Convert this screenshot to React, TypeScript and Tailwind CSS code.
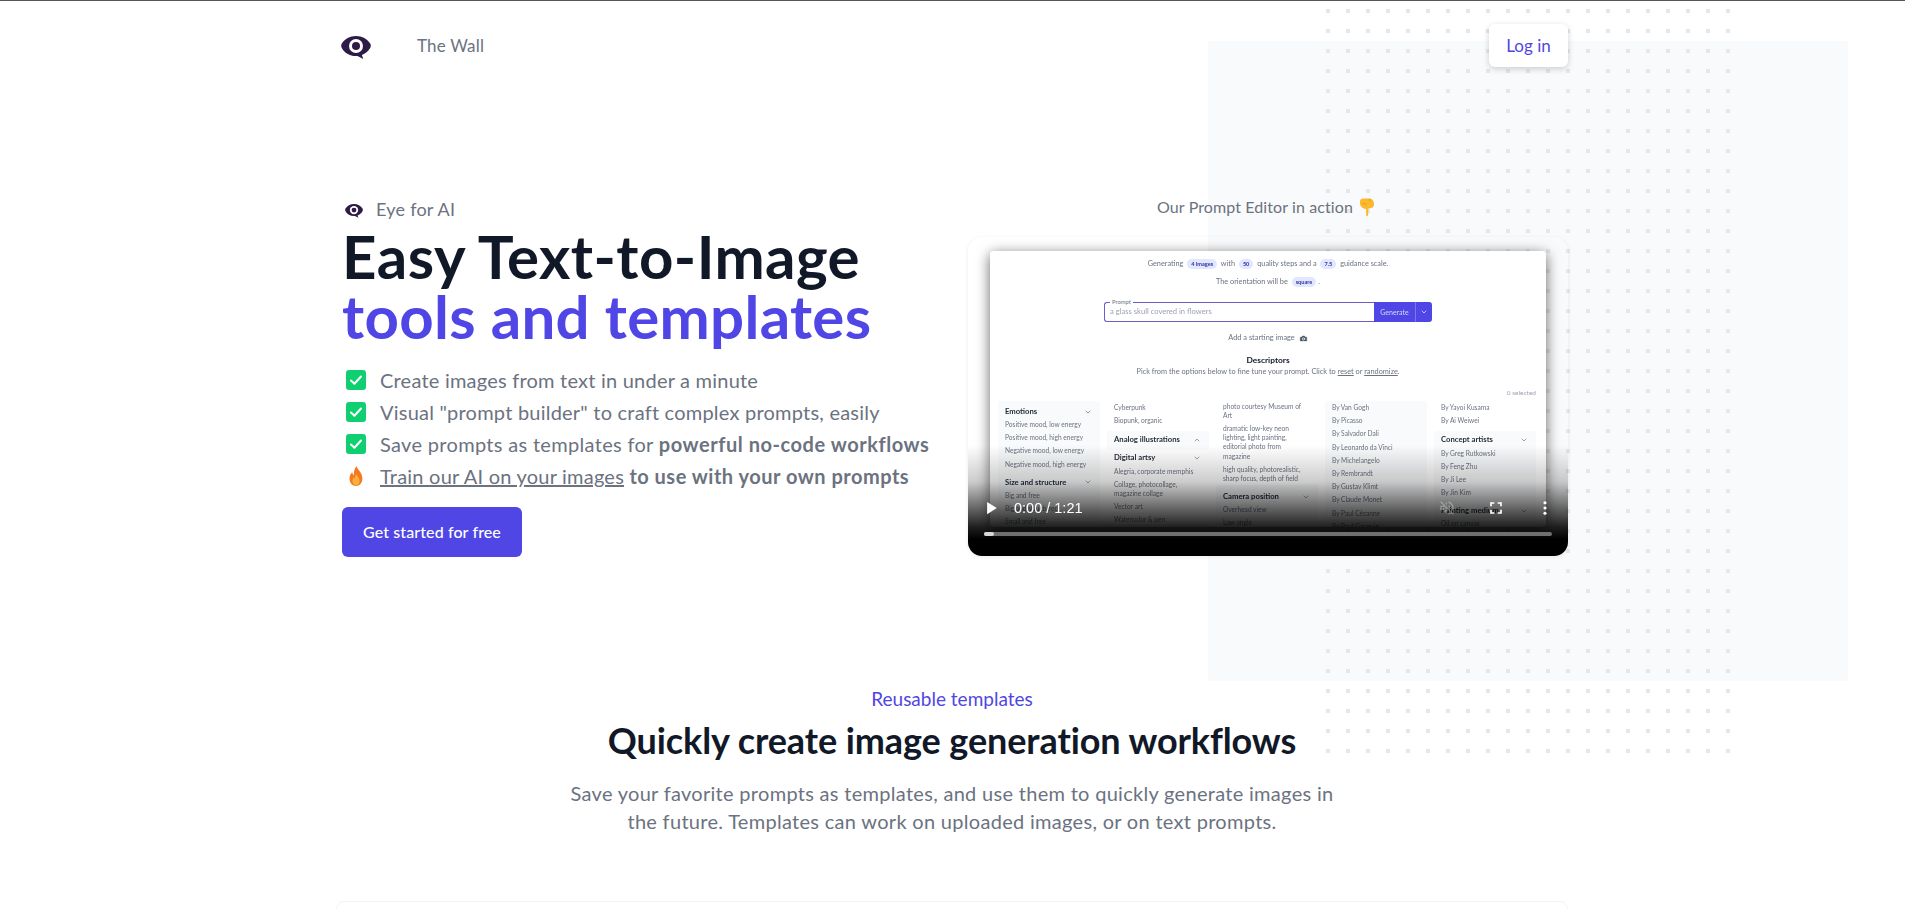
import { ChevronDown, ChevronUp, Camera } from 'lucide-react';
import type { ReactNode } from 'react';

function EyeLogo({ className }: { className: string }) {
  return (
    <svg viewBox="0 0 30 23" className={className} fill="none">
      <path
        d="M0.800 7.500C3.500 3 9 0 15 0s11.500 3 14.200 7.500c.8 1.400.8 3 0 4.400-2 3.400-4.800 5.700-8.300 7l1.400 4-5.800-3C9.500 20.500 3.500 17 .800 11.900c-.8-1.400-.8-3 0-4.400z"
        fill="#2e1a47"
      />
      <circle cx="15" cy="10" r="7" fill="#fff" />
      <circle cx="15" cy="10" r="4" fill="#2e1a47" />
    </svg>
  );
}

function CheckBox() {
  return (
    <span className="flex h-5 w-5 shrink-0 items-center justify-center rounded-[3px] bg-[#10cf70]">
      <svg viewBox="0 0 20 20" className="h-5 w-5" fill="none" stroke="#fff" strokeWidth="2" strokeLinecap="round" strokeLinejoin="round">
        <path d="M5 10.500l3.400 3.200L15 6.500" />
      </svg>
    </span>
  );
}

function Flame() {
  return (
    <svg viewBox="0 0 20 20" className="h-5 w-5 shrink-0">
      <path d="M10.500 0c.6 3.500 5.900 6.300 5.900 12.500C16.400 17 13.500 20 10 20s-6.500-3-6.500-7.500c0-2.800 1.300-4.800 2.700-6.200.2 1.500.8 2.400 1.700 2.900C7.700 5.500 8.500 2.500 10.500 0z" fill="#f4791f" />
      <path d="M10.300 8c.4 2 3.300 3.500 3.300 7 0 2.600-1.600 4.200-3.600 4.200S6.400 17.600 6.400 15c0-1.800 1-3 1.800-3.700.1.700.4 1.100.8 1.300C8.900 11 9.300 9.500 10.300 8z" fill="#fbb03b" />
    </svg>
  );
}

function HandDown() {
  return (
    <svg viewBox="0 0 16 18" className="h-[18px] w-4 shrink-0">
      <path d="M1 3.500C1 1.800 2.300 0.500 4 0.500h6c2.800 0 5 2.200 5 5v1c0 1.900-1.300 3.400-3 3.400-.4 0-.7.1-1 .3-.5.4-1.100.5-1.800.4v6c0 .9-.7 1.500-1.500 1.500S7.200 17.500 7.200 16.600V11C3.500 10.700 1 8.200 1 5.500z" fill="#fbb92d" />
      <path d="M10 0.700h1.500v2.500H10zM3 4.500l5 1.200v1.400L3 5.800z" fill="#f19a20" opacity="0.8" />
    </svg>
  );
}

function Item({ children }: { children: ReactNode }) {
  return <div className="whitespace-pre-line py-[2px] text-[6.600px] leading-[9.200px] text-[#6b7280]">{children}</div>;
}

function Heading({ title, up }: { title: string; up?: boolean }) {
  return (
    <div className="flex h-[13px] items-center justify-between pr-[1px] text-[7.700px] font-bold text-[#1f2937]">
      <span>{title}</span>
      {up ? <ChevronUp size={8} strokeWidth={2} className="text-[#6b7280]" /> : <ChevronDown size={8} strokeWidth={2} className="text-[#6b7280]" />}
    </div>
  );
}

function Rows({ items }: { items: string[] }) {
  return (
    <>
      {items.map((t) => (
        <Item key={t}>{t}</Item>
      ))}
    </>
  );
}

function Pill({ children }: { children: ReactNode }) {
  return <span className="mx-[2px] rounded-full bg-[#e0e7ff] px-[4px] py-[1px] text-[5.600px] font-bold text-[#3730a3]">{children}</span>;
}

function EditorFrame() {
  return (
    <div className="h-[276px] w-[556px] overflow-hidden rounded-[3px] bg-white text-center shadow-[0_3px_14px_rgba(0,0,0,0.6)] blur-[0.35px]">
      <div className="pt-[5px] text-[7.300px] text-[#6b7280]">
        <div className="flex h-[16px] items-center justify-center whitespace-pre">
          Generating <Pill>4 images</Pill> with <Pill>50</Pill> quality steps and a <Pill>7.5</Pill> guidance scale.
        </div>
        <div className="mt-[2px] flex h-[16px] items-center justify-center whitespace-pre">
          The orientation will be <Pill>square</Pill>.
        </div>
      </div>
      <div className="relative mx-auto mt-[12px] flex h-[20px] w-[328px]">
        <span className="absolute left-[6px] top-[-4px] bg-white px-[2px] text-[5.800px] leading-[8px] text-[#6b7280]">Prompt</span>
        <div className="flex flex-1 items-center rounded-l-[3px] border border-r-0 border-[#6a5fc9] pl-[5px] text-[7.600px] text-[#9ca3af]">
          a glass skull covered in flowers
        </div>
        <div className="flex w-[41px] items-center justify-center bg-[#4f46e5] text-[7px] text-[#d7d6f7]">Generate</div>
        <div className="flex w-[17px] items-center justify-center rounded-r-[3px] border-l border-[#7d76e8] bg-[#4f46e5] text-white">
          <ChevronDown size={8} strokeWidth={2} />
        </div>
      </div>
      <div className="mt-[8px] flex h-[16px] items-center justify-center gap-[4px] text-[7.400px] text-[#6b7280]">
        Add a starting image
        <Camera size={9} className="fill-[#4b5563] text-white" />
      </div>
      <div className="mt-[8px] h-[12px] text-[8.400px] font-bold leading-[12px] text-[#111827]">Descriptors</div>
      <div className="h-[12px] text-[7.350px] leading-[12px] text-[#6b7280]">
        Pick from the options below to fine tune your prompt. Click to <span className="underline">reset</span> or{' '}
        <span className="underline">randomize</span>.
      </div>
      <div className="mt-[9px] h-[12px] pr-[10px] text-right text-[6.500px] leading-[12px] text-[#9ca3af]">0 selected</div>
      <div className="mt-[2px] grid grid-cols-[repeat(5,102px)] gap-x-[7px] px-[8px] text-left">
        <div>
          <div className="rounded-[2px] bg-[#f9fafb] px-[7px] pb-[1px] pt-[4px]">
            <Heading title="Emotions" />
            <Rows items={['Positive mood, low energy', 'Positive mood, high energy', 'Negative mood, low energy', 'Negative mood, high energy']} />
          </div>
          <div className="rounded-[2px] bg-[#f9fafb] px-[7px] pt-[4px]">
            <Heading title="Size and structure" />
            <Rows items={['Big and free', 'Big and structured', 'Small and free']} />
          </div>
        </div>
        <div>
          <div className="px-[7px]">
            <Rows items={['Cyberpunk', 'Biopunk, organic']} />
          </div>
          <div className="mt-[3.600px] h-[19px] rounded-[2px] bg-[#f9fafb] px-[7px] pt-[2.500px]">
            <Heading title="Analog illustrations" up />
          </div>
          <div className="px-[7px] pt-[1.500px]">
            <Heading title="Digital artsy" />
            <Rows items={['Alegria, corporate memphis', 'Collage, photocollage,\nmagazine collage', 'Vector art', 'Watercolor & pen']} />
          </div>
        </div>
        <div className="mt-[-1.500px]">
          <div className="px-[7px]">
            <Rows
              items={[
                'photo courtesy Museum of\nArt',
                'dramatic low-key neon\nlighting, light painting,\neditorial photo from\nmagazine',
                'high quality, photorealistic,\nsharp focus, depth of field',
              ]}
            />
          </div>
          <div className="rounded-[2px] bg-[#f9fafb] px-[7px] pt-[5px]">
            <Heading title="Camera position" />
            <Rows items={['Overhead view', 'Low angle']} />
          </div>
        </div>
        <div className="rounded-[2px] bg-[#f9fafb] px-[7px]">
          <Rows
            items={[
              'By Van Gogh',
              'By Picasso',
              'By Salvador Dali',
              'By Leonardo da Vinci',
              'By Michelangelo',
              'By Rembrandt',
              'By Gustav Klimt',
              'By Claude Monet',
              'By Paul Cézanne',
              'By Paul Gauguin',
            ]}
          />
        </div>
        <div>
          <div className="px-[7px]">
            <Rows items={['By Yayoi Kusama', 'By Ai Weiwei']} />
          </div>
          <div className="mt-[3.600px] rounded-[2px] bg-[#f9fafb] px-[7px] pb-[2px] pt-[2.500px]">
            <Heading title="Concept artists" />
            <Rows items={['By Greg Rutkowski', 'By Feng Zhu', 'By Ji Lee', 'By Jin Kim']} />
          </div>
          <div className="rounded-[2px] bg-[#f9fafb] px-[7px] pt-[3px]">
            <Heading title="Painting medium" />
            <Rows items={['Oil on canvas']} />
          </div>
        </div>
      </div>
    </div>
  );
}

function VideoPanel() {
  return (
    <div className="relative h-[319px] w-[600px] overflow-hidden rounded-[14px] px-[22px] pt-[14px] shadow-[0_1px_4px_rgba(0,0,0,0.08)]">
      <EditorFrame />
      <div className="absolute inset-x-0 bottom-0 h-[111px] bg-[linear-gradient(to_bottom,transparent,rgba(0,0,0,0.2)_33%,rgba(0,0,0,0.6)_57%,rgba(0,0,0,0.88)_74%,#000_85%)]" />
      <div className="absolute bottom-[38px] left-[17px] right-[21px] flex items-center text-white">
        <svg viewBox="6 4 14 16" className="h-[14px] w-[13px]" fill="#fff">
          <path d="M8 5v14l11-7z" />
        </svg>
        <span className="ml-[16px] font-['Liberation_Sans',sans-serif] text-[14.500px] leading-[16px]">0:00 / 1:21</span>
        <svg viewBox="0 0 24 24" className="ml-auto h-[18px] w-[18px]" fill="rgba(255,255,255,0.3)">
          <path d="M16.500 12c0-1.770-1.020-3.290-2.500-4.030v2.210l2.450 2.450c.03-.2.05-.41.05-.63zm2.500 0c0 .94-.2 1.820-.54 2.640l1.510 1.510C20.630 14.910 21 13.500 21 12c0-4.280-2.990-7.860-7-8.770v2.060c2.890.86 5 3.540 5 6.710zM4.270 3L3 4.270 7.730 9H3v6h4l5 5v-6.730l4.250 4.250c-.67.52-1.420.93-2.250 1.180v2.060c1.380-.31 2.630-.95 3.690-1.810L19.730 21 21 19.730l-9-9L4.270 3zM12 4L9.910 6.090 12 8.180V4z" />
        </svg>
        <svg viewBox="0 0 24 24" className="ml-[30px] h-[20px] w-[20px]" fill="#fff">
          <path d="M7 14H5v5h5v-2H7v-3zm-2-4h2V7h3V5H5v5zm12 7h-3v2h5v-5h-2v3zM14 5v2h3v3h2V5h-5z" />
        </svg>
        <svg viewBox="0 0 4 16" className="ml-[37px] h-[14px] w-[4px]" fill="#fff">
          <circle cx="2" cy="2" r="1.800" />
          <circle cx="2" cy="8" r="1.800" />
          <circle cx="2" cy="14" r="1.800" />
        </svg>
      </div>
      <div className="absolute bottom-[20px] left-[16px] right-[16px] h-[4px] rounded-full bg-[#6f6f6f]">
        <div className="h-full w-[10px] rounded-full bg-[#d8d8d8]" />
      </div>
    </div>
  );
}

export default function App() {
  return (
    <div className="relative h-[909px] overflow-hidden bg-white font-['Lato',sans-serif]">
      <div className="h-px bg-[#555]" />

      {/* backdrop */}
      <div className="absolute left-[1208px] top-[41px] h-[640px] w-[640px] bg-[#f9fafb]" />
      <svg className="absolute left-[1326px] top-[9px]" width="404" height="744">
        <defs>
          <pattern id="dots" x="0" y="0" width="20" height="20" patternUnits="userSpaceOnUse">
            <rect width="4" height="4" fill="#e5e7eb" />
          </pattern>
        </defs>
        <rect width="404" height="744" fill="url(#dots)" />
      </svg>

      <div className="relative ml-[336px] w-[1232px]">
        <nav className="mt-[23px] flex h-[43px] items-center">
          <EyeLogo className="ml-[5px] mt-[3px] h-[23px] w-[30px]" />
          <a className="ml-[46px] text-[17px] tracking-[0.2px] text-[#6b7280]">The Wall</a>
          <button className="ml-auto h-[43px] w-[79px] rounded-md bg-white text-[17px] text-[#4f46e5] shadow-[0_2px_6px_rgba(0,0,0,0.18)]">Log in</button>
        </nav>

        <section className="mt-[126px] flex items-start justify-between">
          <div className="ml-[6px] pt-[2px]">
            <div className="flex h-[28px] items-center text-[18px] tracking-[0.25px] text-[#6b7280]">
              <EyeLogo className="ml-[3px] mt-[3px] h-[14px] w-[18px]" />
              <span className="ml-[13px]">Eye for AI</span>
            </div>
            <h1 className="mt-[3px] text-[60px] font-bold leading-[60px] tracking-[0.45px] text-[#111827]">
              Easy Text-to-Image
              <br />
              <span className="tracking-[0.3px] text-[#4f46e5]">tools and templates</span>
            </h1>
            <ul className="mt-[18px] text-[20px] leading-[32px] tracking-[0.22px] text-[#6b7280]">
              <li className="flex items-center pl-[4px]">
                <CheckBox />
                <span className="ml-[14px]">Create images from text in under a minute</span>
              </li>
              <li className="flex items-center pl-[4px]">
                <CheckBox />
                <span className="ml-[14px]">Visual "prompt builder" to craft complex prompts, easily</span>
              </li>
              <li className="flex items-center pl-[4px]">
                <CheckBox />
                <span className="ml-[14px] tracking-[0.32px]">
                  Save prompts as templates for <b className="font-bold tracking-[0.55px]">powerful no-code workflows</b>
                </span>
              </li>
              <li className="flex items-center pl-[4px]">
                <Flame />
                <span className="ml-[14px]">
                  <span className="underline">Train our AI on your images</span> <b className="font-bold tracking-[0.5px]">to use with your own prompts</b>
                </span>
              </li>
            </ul>
            <button className="mt-[15px] h-[50px] w-[180px] rounded-md bg-[#4f46e5] text-[16px] font-medium tracking-[0.1px] text-white">Get started for free</button>
          </div>

          <div>
            <div className="flex h-[28px] items-center justify-center gap-[6px] pr-[4px] text-[16px] tracking-[0.1px] text-[#6b7280]">
              Our Prompt Editor in action
              <HandDown />
            </div>
            <div className="mt-[16px]">
              <VideoPanel />
            </div>
          </div>
        </section>

        <section className="mt-[128px] text-center">
          <div className="text-[19px] leading-[28px] text-[#4f46e5]">Reusable templates</div>
          <h2 className="mt-[7px] text-[36px] font-bold leading-[40px] tracking-[-0.1px] text-[#111827]">Quickly create image generation workflows</h2>
          <p className="mx-auto mt-[19px] w-[775px] text-[20px] leading-[28px] tracking-[0.3px] text-[#6b7280]">
            Save your favorite prompts as templates, and use them to quickly generate images in the future. Templates can work on uploaded images, or on text prompts.
          </p>
        </section>

        <div className="mt-[66px] h-[200px] rounded-lg border border-gray-100 bg-white" />
      </div>
    </div>
  );
}
